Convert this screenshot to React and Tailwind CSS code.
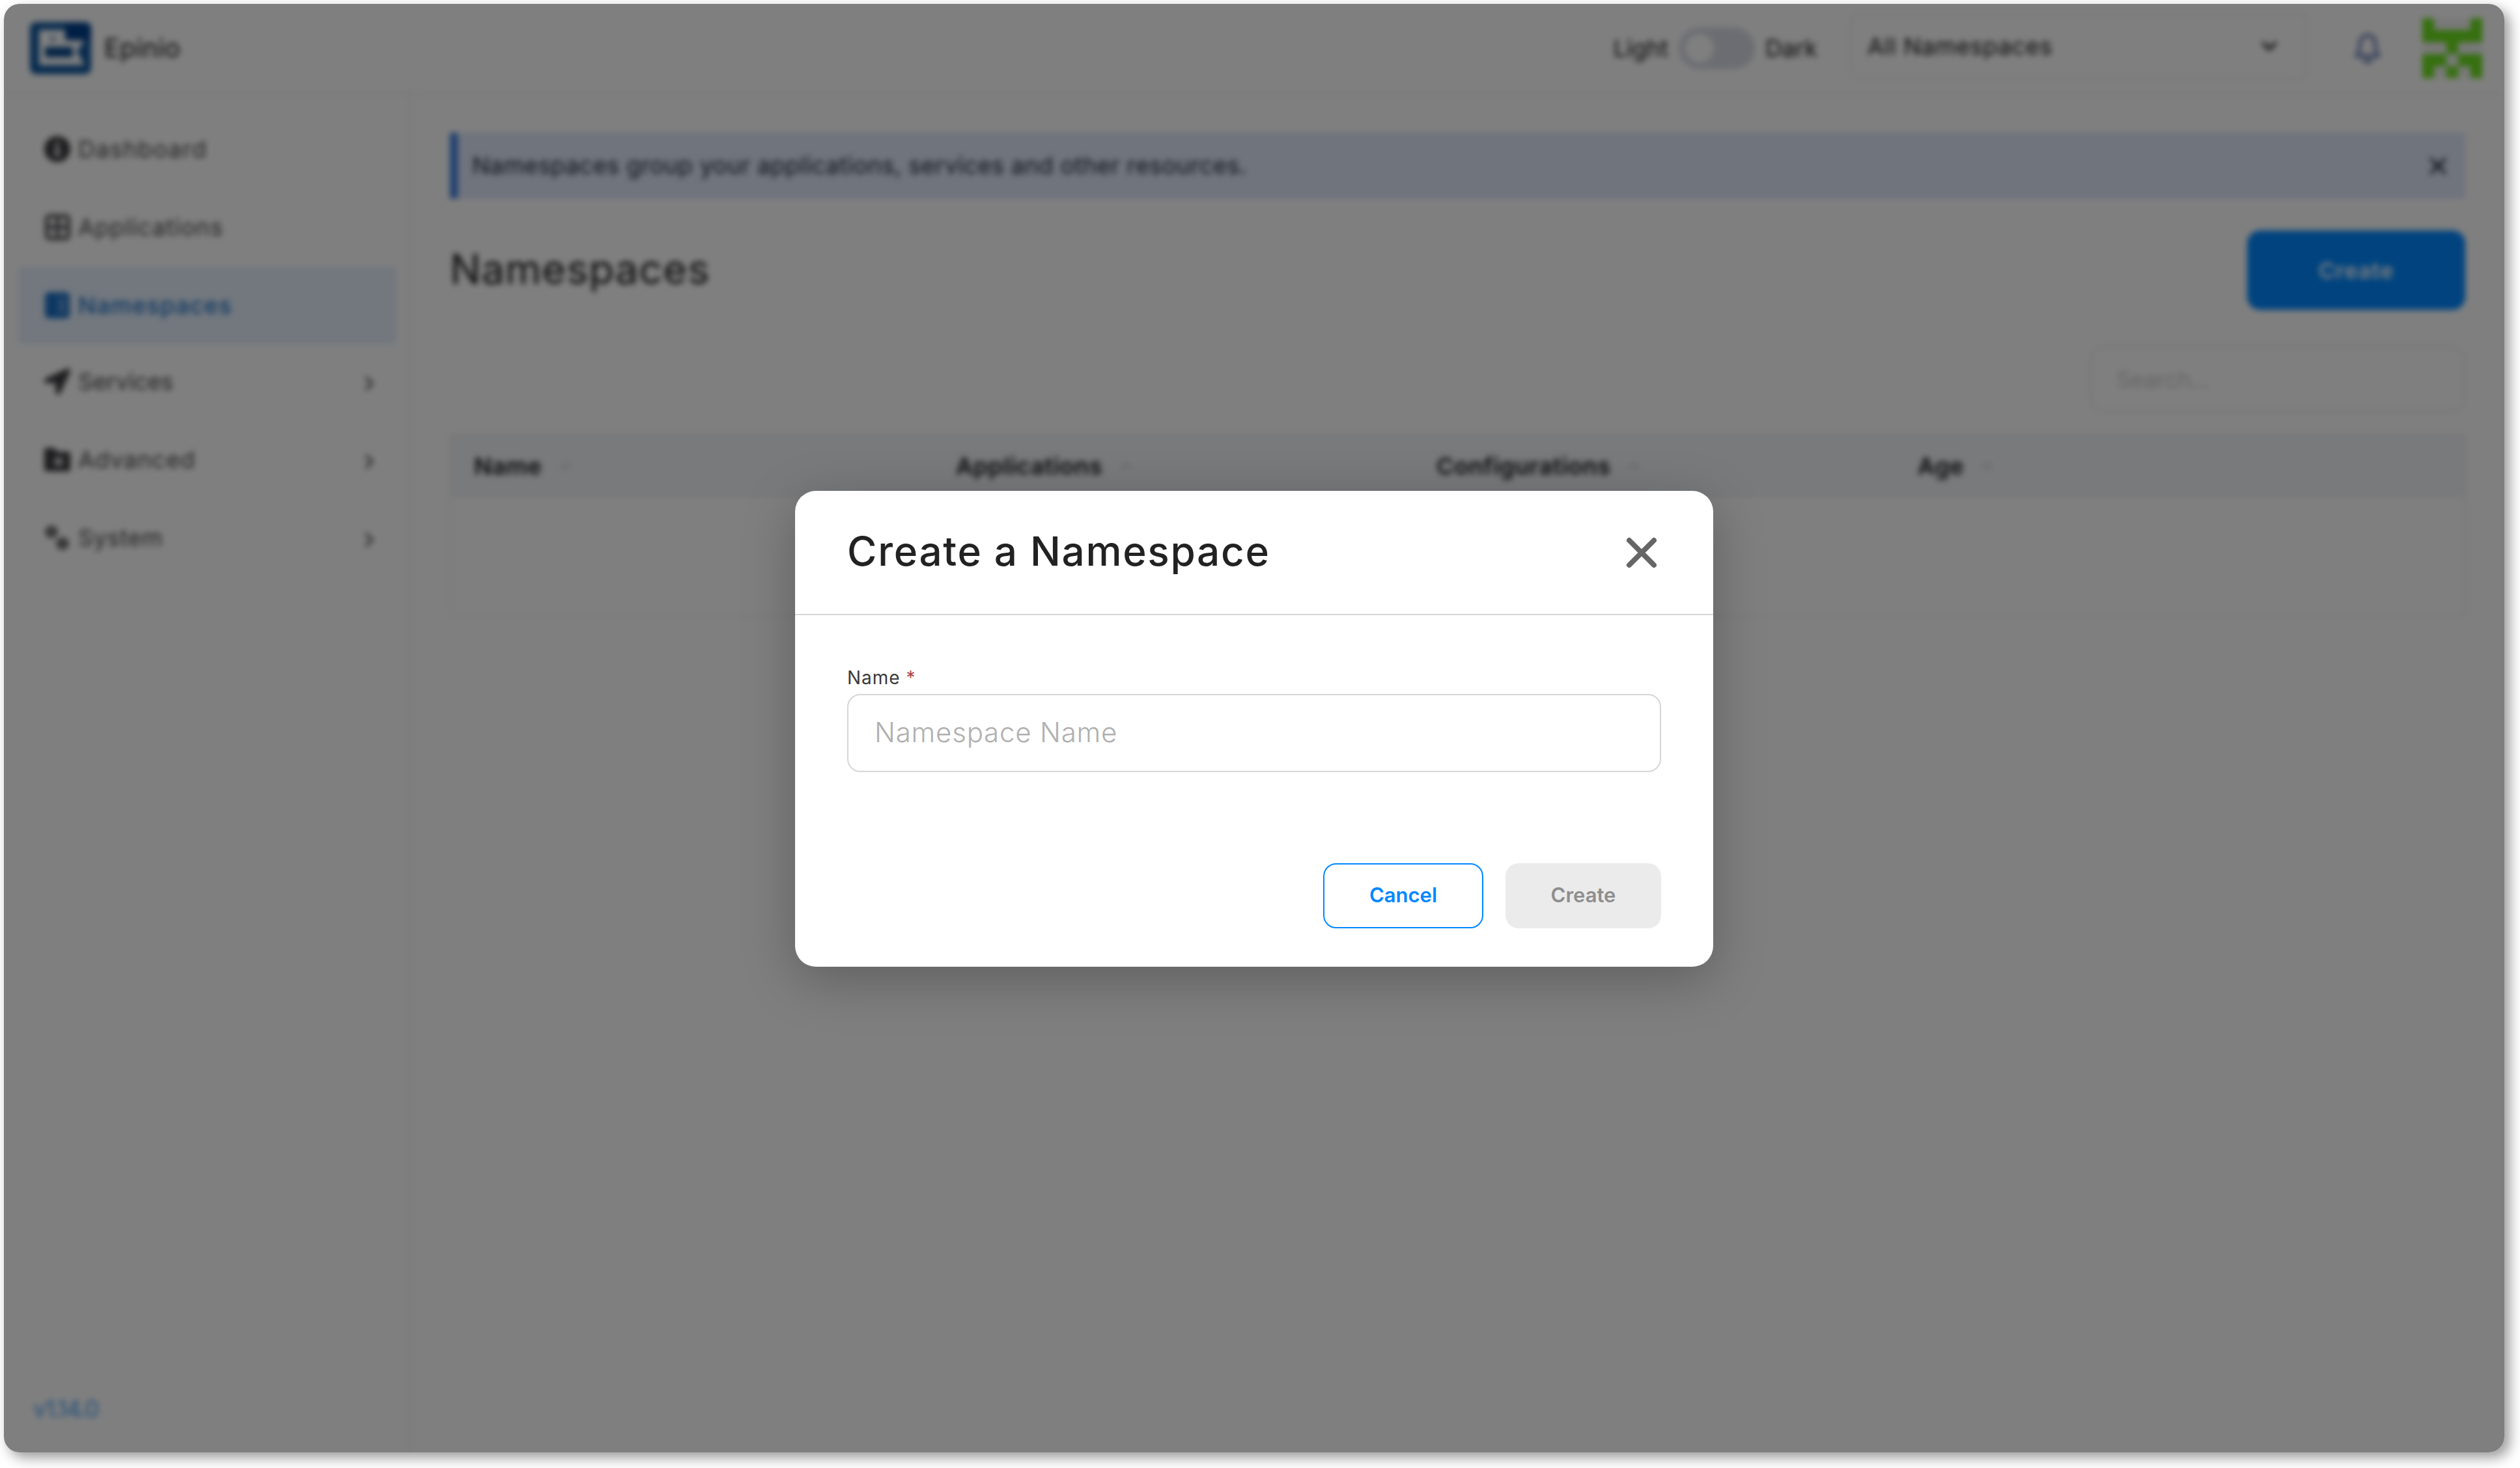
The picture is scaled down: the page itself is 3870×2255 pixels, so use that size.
import { ChevronDown, ChevronRight, ChevronUp, X } from "lucide-react";
import { FaLocationArrow } from "react-icons/fa";

const DashboardIcon = () => (
    <svg viewBox="0 0 44 44" className="w-11 h-11">
        <circle cx="22" cy="22" r="20" fill="currentColor" />
        <path d="M22 12v16" stroke="#fff" strokeWidth="4" strokeLinecap="round" />
        <circle cx="22" cy="29" r="4" fill="#fff" />
    </svg>
);

const ApplicationsIcon = () => (
    <svg viewBox="0 0 44 44" className="w-11 h-11" fill="none" stroke="#55555a" strokeWidth="6">
        <rect x="6" y="5" width="33" height="34" rx="4" />
        <path d="M22.5 5v34M6 22h33" />
    </svg>
);

const NamespacesIcon = () => (
    <svg viewBox="0 0 44 44" className="w-11 h-11">
        <rect x="3" y="2" width="38" height="40" rx="6" fill="currentColor" />
        <path d="M27 9v26" stroke="#e2ecf9" strokeWidth="2" />
        <path d="M31 14h5M31 22h5M31 30h5" stroke="#e2ecf9" strokeWidth="2" />
    </svg>
);

const ServicesIcon = () => <FaLocationArrow className="w-10 h-10" />;

const AdvancedIcon = () => (
    <svg viewBox="0 0 44 44" className="w-11 h-11">
        <path d="M2 8a4 4 0 0 1 4-4h11l5 6h16a4 4 0 0 1 4 4v22a4 4 0 0 1-4 4H6a4 4 0 0 1-4-4z" fill="currentColor" />
        <circle cx="24" cy="25" r="4.5" fill="none" stroke="#fff" strokeWidth="4" />
    </svg>
);

const SystemIcon = () => (
    <svg viewBox="0 0 44 44" className="w-11 h-11" fill="none" stroke="currentColor">
        <circle cx="13" cy="13" r="6" strokeWidth="6" />
        <circle cx="30" cy="31" r="6" strokeWidth="6" />
    </svg>
);

const navItems = [
    { label: "Dashboard", icon: DashboardIcon, tracking: "tracking-[1.4px]" },
    { label: "Applications", icon: ApplicationsIcon, tracking: "tracking-[1.1px]" },
    { label: "Namespaces", icon: NamespacesIcon, tracking: "tracking-[1.2px]", active: true },
    { label: "Services", icon: ServicesIcon, tracking: "tracking-[-0.2px]", expandable: true },
    { label: "Advanced", icon: AdvancedIcon, tracking: "tracking-[1px]", expandable: true },
    { label: "System", icon: SystemIcon, tracking: "tracking-[0.7px]", expandable: true },
];

const columns = ["Name", "Applications", "Configurations", "Age"];

// 5x5 identicon, 1 = filled
const identicon = [
    1, 0, 0, 0, 1,
    1, 1, 1, 1, 1,
    0, 0, 1, 0, 0,
    1, 1, 0, 1, 1,
    1, 0, 1, 0, 1,
];

const Logo = () => (
    <svg viewBox="0 0 94 80" className="w-[94px] h-20">
        <rect width="94" height="80" rx="9" fill="#10589e" />
        <path d="M54 0h31a9 9 0 0 1 9 9v19H54z" fill="#003f8c" />
        <path d="M14 12h40v16h30L72 45l12 21H14z" fill="#fff" />
        <path d="M23 38h43v16H23z" fill="#0b4a8c" />
        <path d="M31 22h8v7h-8z" fill="#5f93c4" />
    </svg>
);

const Header = () => (
    <header className="flex items-center h-[138px] border-b-2 border-[#e6e6e6] pl-10 pr-[34px] text-[#141419]">
        <Logo />
        <span className="ml-5 text-[40px] tracking-[0.3px]">Epinio</span>

        <div className="ml-auto flex items-center text-[36px]">
            <span>Light</span>
            <div className="mx-4 w-[117px] h-16 rounded-full bg-[#d9dbe4] p-[10px]">
                <div className="w-11 h-11 rounded-full bg-white" />
            </div>
            <span>Dark</span>
        </div>

        <div className="ml-[51px] mb-1.5 flex items-center justify-between w-[700px] h-[102px] rounded-lg border-2 border-[#e6e6e6] pl-6 pr-[37px]">
            <span className="text-[36px] tracking-[0.7px]">All Namespaces</span>
            <ChevronDown className="w-9 h-9" strokeWidth={3} />
        </div>

        <svg viewBox="0 0 40 50" className="ml-[74px] w-10 h-[50px]" fill="none" stroke="#7285ba" strokeWidth="5.5" strokeLinejoin="round">
            <path d="M20 5C11 6 8 13 8 21c0 8-2 12-5 16h34c-3-4-5-8-5-16 0-8-3-15-12-16z" />
            <path d="M14 42c2 5 10 5 12 0" fill="#7285ba" />
        </svg>

        <div className="ml-[64px] grid grid-cols-5 w-[92px] h-[92px] bg-[#f2f2f2]">
            {identicon.map((on, index) => (
                <div key={index} className={on ? "bg-[#6be01d]" : ""} />
            ))}
        </div>
    </header>
);

const Sidebar = () => (
    <aside className="flex flex-col w-[625px] border-r-2 border-[#e6e6e6] pt-[25px] pl-[21px] pr-5">
        {navItems.map((item) => {
            const Icon = item.icon;
            return (
                <div
                    key={item.label}
                    className={`flex items-center h-[120px] rounded-lg pl-[39px] pr-6 text-[36px] ${item.active ? "bg-[#e6f0fd] text-[#1a6fc4] font-medium" : "text-[#45454b]"
                        }`}
                >
                    <div className={`flex items-center ${item.expandable ? "mb-1.5" : ""}`}>
                        <div className={`flex items-center justify-center w-11 ${item.active ? "" : "text-[#3c3c40]"}`}>
                            <Icon />
                        </div>
                        <span className={`ml-2.5 ${item.tracking}`}>{item.label}</span>
                    </div>
                    {item.expandable && <ChevronRight className="ml-auto w-9 h-9" strokeWidth={2.3} />}
                </div>
            );
        })}
        <span className="mt-auto mb-[40px] pl-6 text-[36px] tracking-[-1.6px] text-[#3f9bf5]">v1.14.0</span>
    </aside>
);

const Content = () => (
    <main className="flex-1 pt-[60px] pl-[60px] pr-[60px]">
        {/* Info banner */}
        <div className="flex items-center justify-between h-[101px] bg-[#dfe8fb] border-l-[12px] border-[#3d7de0] pl-[22px] pr-[21px] text-[#1d2233]">
            <span className="mb-0.5 text-[36px] tracking-[0.45px]">
                Namespaces group your applications, services and other resources.
            </span>
            <X className="w-[42px] h-[42px]" strokeWidth={2.3} />
        </div>

        {/* Title */}
        <div className="mt-[49px] flex items-center justify-between">
            <h1 className="mb-1 text-[63px] leading-[72px] tracking-[1.1px] text-[#141419]">Namespaces</h1>
            <button className="w-[335px] h-[122px] rounded-[20px] bg-[#0087ff] text-white text-[34px] font-semibold tracking-[1px]">
                Create
            </button>
        </div>

        <div className="mt-[56px] flex justify-end">
            <div className="flex items-center w-[576px] h-[101px] rounded-[20px] border-2 border-[#e3e3e3] pl-[38px] text-[36px] tracking-[-0.8px] text-[#cbcbcb]">
                Search...
            </div>
        </div>

        {/* Table */}
        <div className="mt-[34px] border-2 border-[#e8e8e8]">
            <div className="grid grid-cols-[740px_738px_739px_1fr] h-24 bg-[#f2f4f8] pl-[35px] pb-0.5">
                {columns.map((column) => (
                    <div key={column} className="flex items-center text-[36px] font-semibold tracking-[0.6px] text-[#141419]">
                        {column}
                        <ChevronUp className="ml-6 w-6 h-6 text-[#c8c8cc]" strokeWidth={2.5} />
                    </div>
                ))}
            </div>
            <div className="h-[180px]" />
        </div>
    </main>
);

const CreateNamespaceModal = () => (
    <div className="w-[1410px] h-[731px] mt-[748px] ml-[1215px] flex flex-col rounded-[32px] bg-white shadow-[0_20px_80px_rgba(0,0,0,0.25)]">
        <div className="flex items-center justify-between h-[191px] border-b-2 border-[#d6d6d6] pl-20 pr-[78px]">
            <h2 className="mb-1 text-[62px] font-medium tracking-[1.7px] text-[#222222]">Create a Namespace</h2>
            <svg viewBox="0 0 64 64" className="w-16 h-16" stroke="#666666" strokeWidth="8" strokeLinecap="round">
                <path d="M13 13l38 38M51 13L13 51" />
            </svg>
        </div>
        <div className="flex flex-col flex-1 px-20">
            <label className="mt-[78px] text-[28px] leading-[36px] tracking-[1px] text-[#3a3a3a]">
                Name <span className="text-[#b0474c]">*</span>
            </label>
            <div className="mt-[7px] flex items-center h-[120px] rounded-[20px] border-2 border-[#d6d6d6] pl-10 pb-1 text-[42px] font-light tracking-[0.8px] text-[#b0b0b0]">
                Namespace Name
            </div>
            <div className="mt-[140px] flex justify-end gap-[34px] text-[31px] font-semibold">
                <button className="w-[246px] h-[100px] rounded-[20px] border-2 border-[#0087ff] pb-0.5 text-[#0087ff]">
                    Cancel
                </button>
                <button className="w-[239px] h-[100px] rounded-[20px] bg-[#ebebeb] pb-0.5 text-[#8e8e8e]">Create</button>
            </div>
        </div>
    </div>
);

export default function App() {
    return (
        <div className="w-[3870px] h-[2255px] overflow-hidden bg-white p-1.5 font-['Inter',sans-serif]">
            <div className="relative w-[3840px] h-[2225px] rounded-3xl shadow-[8px_8px_20px_rgba(0,0,0,0.4)]">
                <div className="h-full rounded-3xl overflow-hidden bg-white">
                    <div className="flex flex-col h-full blur-[5px]">
                        <Header />
                        <div className="flex flex-1">
                            <Sidebar />
                            <Content />
                        </div>
                    </div>
                </div>
                {/* Dimmed overlay with the open dialog */}
                <div className="absolute inset-0 rounded-3xl overflow-hidden bg-black/50">
                    <CreateNamespaceModal />
                </div>
            </div>
        </div>
    );
}
